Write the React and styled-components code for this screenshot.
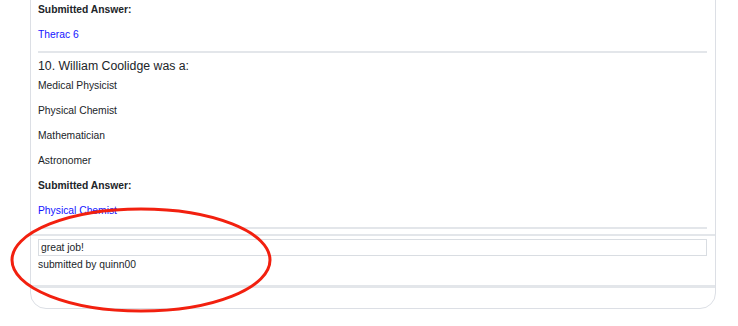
import React from 'react'
import styled, { createGlobalStyle } from 'styled-components'

const GlobalStyle = createGlobalStyle`
   html, body {
      margin: 0;
      padding: 0;
      background: #ffffff;
      overflow: hidden;
   }
   body {
      font-family: "Liberation Sans", Arial, sans-serif;
      color: #212529;
   }
`

const Page = styled.div`
   position: relative;
   width: 738px;
   height: 326px;
   padding: 0 22px 0 30px;
   box-sizing: border-box;
   overflow: hidden;
`

const Card = styled.div`
   margin-top: -20px;
   border: 1px solid #dcdfe5;
   border-radius: 0 0 16px 16px;
   background: #fff;
`

const QuestionBody = styled.div`
   padding: 20px 8px 5px 7px;
`

const Text = styled.p`
   margin: 0 0 9px;
   padding-top: 1px;
   font-size: 10.3px;
   line-height: 15px;
   font-weight: ${p => (p.$bold ? 700 : 400)};
   color: ${p => (p.$answer ? '#1414ff' : '#212529')};
`

const Rule = styled.div`
   height: 2px;
   background: #e3e6ea;
`

const Question = styled.h4`
   margin: 5px 0 3px;
   font-size: 12.3px;
   line-height: 16px;
   font-weight: 400;
   color: #212529;
`

const CommentSection = styled.div`
   border-top: 2px solid #e3e6ea;
   border-bottom: 3px solid #e3e6ea;
   padding: 3px 8px 13px 7px;
`

const CommentBox = styled.div`
   height: 17px;
   box-sizing: border-box;
   border: 1px solid #d9dde2;
   padding: 0 2px;
   font-size: 10.3px;
   line-height: 15px;
`

const Author = styled.div`
   margin-top: 2px;
   font-size: 10.3px;
   line-height: 14px;
`

const CardFooter = styled.div`
   height: 20px;
`

const Annotation = styled.svg`
   position: absolute;
   left: 0;
   top: 0;
   pointer-events: none;
`

const App = () => {
   const options = ['Medical Physicist', 'Physical Chemist', 'Mathematician', 'Astronomer']
   return (
      <Page>
         <GlobalStyle />
         <Card>
            <QuestionBody>
               <Text $bold>Submitted Answer:</Text>
               <Text $answer>Therac 6</Text>
               <Rule />
               <Question>10. William Coolidge was a:</Question>
               {options.map(o => (
                  <Text key={o}>{o}</Text>
               ))}
               <Text $bold>Submitted Answer:</Text>
               <Text $answer>Physical Chemist</Text>
               <Rule />
            </QuestionBody>
            <CommentSection>
               <CommentBox>great job!</CommentBox>
               <Author>submitted by quinn00</Author>
            </CommentSection>
            <CardFooter />
         </Card>
         <Annotation width="738" height="326" viewBox="0 0 738 326">
            <ellipse cx="141" cy="260" rx="129" ry="51" fill="none" stroke="#f2200f" strokeWidth="3" />
         </Annotation>
      </Page>
   )
}

export default App
